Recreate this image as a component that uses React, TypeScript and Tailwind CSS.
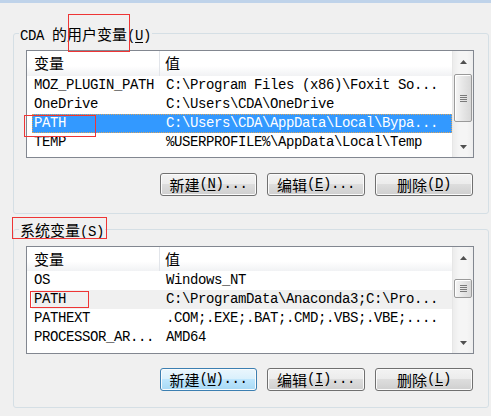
import React from 'react';

type Row = {name: string; value: string; state?: 'active' | 'inactive'};

const userRows: Row[] = [
  {name: 'MOZ_PLUGIN_PATH', value: 'C:\\Program Files (x86)\\Foxit So...'},
  {name: 'OneDrive', value: 'C:\\Users\\CDA\\OneDrive'},
  {name: 'PATH', value: 'C:\\Users\\CDA\\AppData\\Local\\Bypa...', state: 'active'},
  {name: 'TEMP', value: '%USERPROFILE%\\AppData\\Local\\Temp'},
];

const systemRows: Row[] = [
  {name: 'OS', value: 'Windows_NT'},
  {name: 'PATH', value: 'C:\\ProgramData\\Anaconda3;C:\\Pro...', state: 'inactive'},
  {name: 'PATHEXT', value: '.COM;.EXE;.BAT;.CMD;.VBS;.VBE;....'},
  {name: 'PROCESSOR_AR...', value: 'AMD64'},
];

function Cn({children}: {children: React.ReactNode}) {
  return <span className="font-['Noto_Sans_CJK_SC',sans-serif] text-[15px] tracking-normal">{children}</span>;
}

function Key({children}: {children: React.ReactNode}) {
  return <span className="underline underline-offset-[2px]">{children}</span>;
}

function Arrow({down}: {down?: boolean}) {
  return (
    <div className="flex h-[21px] shrink-0 items-center justify-center">
      <svg width="7" height="4" viewBox="0 0 7 4">
        {down ? (
          <polygon points="0,0 7,0 3.5,4" fill="#505050" />
        ) : (
          <polygon points="3.5,0 7,4 0,4" fill="#505050" />
        )}
      </svg>
    </div>
  );
}

function ScrollBar({thumbTop, thumbHeight}: {thumbTop: string; thumbHeight: string}) {
  return (
    <div className="flex w-[21px] shrink-0 flex-col border-l border-[#e6e6e6] bg-[linear-gradient(90deg,#ececec,#f5f5f5_30%,#f5f5f5_70%,#eeeeee)]">
      <Arrow />
      <div
        className={`${thumbTop} ${thumbHeight} mx-[1px] flex shrink-0 flex-col items-center justify-center gap-[1px] rounded-[2px] border border-[#9a9a9a] bg-[linear-gradient(90deg,#f6f6f6,#e6e6e6_50%,#d8d8d8)] shadow-[inset_1px_1px_0_#ffffff]`}
      >
        <div className="h-px w-[7px] bg-[#7a7a7a]" />
        <div className="h-px w-[7px] bg-[#7a7a7a]" />
        <div className="h-px w-[7px] bg-[#7a7a7a]" />
        <div className="h-px w-[7px] bg-[#7a7a7a]" />
      </div>
      <div className="flex-1" />
      <Arrow down />
    </div>
  );
}

function VarList({
  rows,
  headerHeight,
  thumbTop,
  thumbHeight,
}: {
  rows: Row[];
  headerHeight: string;
  thumbTop: string;
  thumbHeight: string;
}) {
  return (
    <div className="flex h-[108px] w-[448px] border border-[#828790] bg-white">
      <div className="flex min-w-0 flex-1 flex-col overflow-hidden">
        <div className={`${headerHeight} flex shrink-0 items-stretch bg-[linear-gradient(#ffffff,#ffffff_60%,#f1f2f4)]`}>
          <div className="flex w-[133px] items-center border-r border-[#e2e5ea] pl-[7px]">
            <Cn>变量</Cn>
          </div>
          <div className="flex items-center pl-[5px]">
            <Cn>值</Cn>
          </div>
        </div>
        {rows.map((r) => (
          <div
            key={r.name + r.value}
            className={`ml-[5px] flex h-[19px] shrink-0 items-center whitespace-nowrap leading-[19px] ${
              r.state === 'active'
                ? 'bg-[#3399ff] text-white outline-1 -outline-offset-1 outline-dotted outline-[#d9a35c]'
                : r.state === 'inactive'
                ? 'bg-[#f0f0f0]'
                : ''
            }`}
          >
            <div className="w-[134px] shrink-0 pl-[2px]">{r.name}</div>
            <div>{r.value}</div>
          </div>
        ))}
      </div>
      <ScrollBar thumbTop={thumbTop} thumbHeight={thumbHeight} />
    </div>
  );
}

function Button({children, width, focused}: {children: React.ReactNode; width: string; focused?: boolean}) {
  return (
    <div
      className={`${width} flex h-[23px] items-center justify-center rounded-[3px] border leading-[21px] shadow-[inset_0_0_0_1px_#fbfbfb] ${
        focused
          ? 'border-[#3c7fb1] bg-[linear-gradient(#eaf6fd,#d9f0fc_50%,#bee6fd_50%,#a7d9f5)]'
          : 'border-[#707070] bg-[linear-gradient(#f3f3f3,#ebebeb_50%,#dddddd_50%,#cfcfcf)]'
      }`}
    >
      {children}
    </div>
  );
}

function GroupBox({label, className, children}: {label: React.ReactNode; className: string; children: React.ReactNode}) {
  return (
    <div className={`relative ml-[13px] w-[476px] rounded-[3px] border border-[#d5dfe5] ${className}`}>
      <div className="absolute -top-[10px] left-[5px] bg-[#f0f0f0] px-[1px] leading-[20px] whitespace-nowrap">
        {label}
      </div>
      <div className="pl-[12px] pt-[16px]">{children}</div>
    </div>
  );
}

export default function App() {
  return (
    <div className="relative h-[416px] w-[491px] overflow-hidden bg-[#f0f0f0] font-['Liberation_Mono','Noto_Sans_CJK_SC',monospace] text-[14px] tracking-[-0.4px] text-black">
      <div className="h-[3px] bg-[#bfd3ea]" />

      <GroupBox
        className="mt-[30px] h-[181px]"
        label={
          <>
            CDA <Cn>的用户变量</Cn>(<Key>U</Key>)
          </>
        }
      >
        <VarList rows={userRows} headerHeight="h-[25px]" thumbTop="mt-[2px]" thumbHeight="h-[48px]" />
        <div className="mt-[15px] ml-[134px] flex gap-[10px]">
          <Button width="w-[97px]">
            <Cn>新建</Cn>(<Key>N</Key>)...
          </Button>
          <Button width="w-[98px]">
            <Cn>编辑</Cn>(<Key>E</Key>)...
          </Button>
          <Button width="w-[98px]">
            <Cn>删除</Cn>(<Key>D</Key>)
          </Button>
        </div>
      </GroupBox>

      <GroupBox
        className="mt-[15px] h-[179px]"
        label={
          <>
            <Cn>系统变量</Cn>(<Key>S</Key>)
          </>
        }
      >
        <VarList rows={systemRows} headerHeight="h-[24px]" thumbTop="mt-[11px]" thumbHeight="h-[19px]" />
        <div className="mt-[14px] ml-[134px] flex gap-[10px]">
          <Button width="w-[97px]" focused>
            <Cn>新建</Cn>(<Key>W</Key>)...
          </Button>
          <Button width="w-[98px]">
            <Cn>编辑</Cn>(<Key>I</Key>)...
          </Button>
          <Button width="w-[98px]">
            <Cn>删除</Cn>(<Key>L</Key>)
          </Button>
        </div>
      </GroupBox>

      {/* red annotation boxes */}
      <div className="absolute left-[68px] top-[14px] h-[38px] w-[62px] border border-[#ee3535]" />
      <div className="absolute left-[24px] top-[115px] h-[22px] w-[72px] border border-[#ee3535]" />
      <div className="absolute left-[12px] top-[217px] h-[22px] w-[95px] border border-[#ee3535]" />
      <div className="absolute left-[30px] top-[291px] h-[17px] w-[59px] border border-[#ee3535]" />
    </div>
  );
}
